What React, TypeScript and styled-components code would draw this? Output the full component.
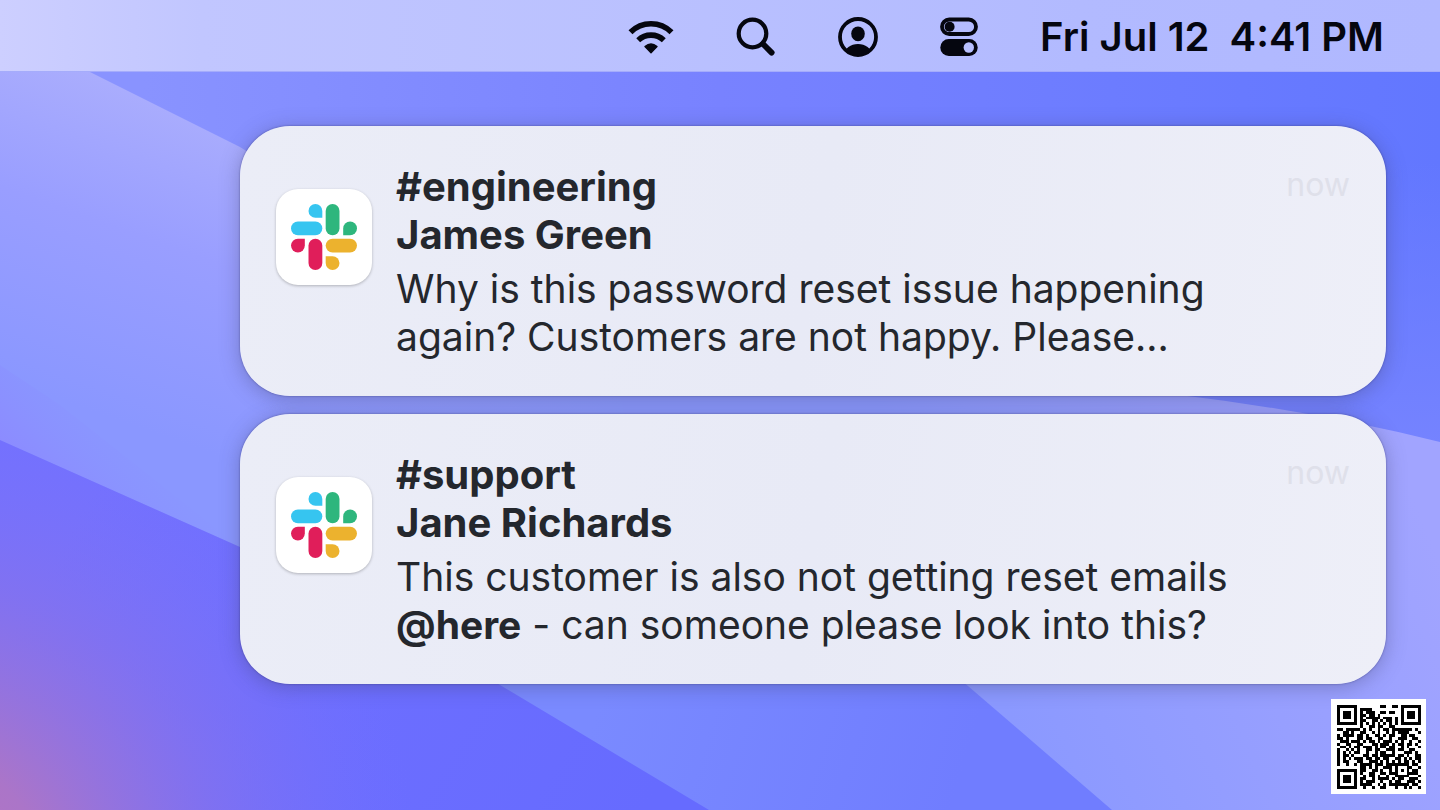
import React from "react";
import styled, { createGlobalStyle } from "styled-components";

const GlobalStyle = createGlobalStyle`
  * { box-sizing: border-box; }
  body { margin: 0; font-family: Inter, "Liberation Sans", sans-serif; color: #24272d; }
  p, h2, ul { margin: 0; padding: 0; }
`;

const Desktop = styled.div`
  position: relative;
  min-height: 100vh;
  overflow: hidden;
  isolation: isolate;
`;

const WallpaperArt = styled.svg`
  position: absolute;
  inset: 0;
  width: 100%;
  height: 100%;
  z-index: -1;
`;

const MenuBar = styled.header`
  display: flex;
  align-items: center;
  justify-content: flex-end;
  gap: 62px;
  height: 72px;
  padding: 3px 56px 0 24px;
  border-bottom: 1px solid #a5acfb;
  background: linear-gradient(90deg, #cdcfff 0%, #c1c6ff 14%, #bac1ff 45%, #b2baff 75%, #b0b8ff 100%);
`;

const MenuButton = styled.button`
  display: flex;
  padding: 0;
  border: 0;
  background: none;
  color: #05060f;
`;

const Clock = styled.time`
  display: flex;
  gap: 20px;
  font-size: 40px;
  font-weight: 600;
  line-height: 48px;
  color: #05060f;
  white-space: nowrap;
`;

const NotificationList = styled.ul`
  display: flex;
  flex-direction: column;
  align-items: flex-end;
  gap: 18px;
  padding: 54px;
  list-style: none;
`;

const Card = styled.li`
  display: flex;
  gap: 24px;
  width: 100%;
  max-width: 1146px;
  padding: 37px 36px 35px;
  border-radius: 50px;
  background: linear-gradient(100deg, #ebedf7 0%, #e8eaf6 50%, #eeeff8 100%);
  box-shadow: 0 0 2px rgba(40, 40, 90, 0.6), 0 3px 20px rgba(60, 60, 100, 0.36);
`;

const AppTile = styled.div`
  display: flex;
  align-items: center;
  justify-content: center;
  flex: none;
  width: 96px;
  height: 96px;
  margin-top: 26px;
  border-radius: 22px;
  background: #fff;
  box-shadow: 0 1px 3px rgba(0, 0, 0, 0.25);
`;

const Message = styled.div`
  display: flex;
  flex-direction: column;
  gap: 6px;
  flex: 1;
  min-width: 0;
`;

const Title = styled.h2`
  font-size: 40px;
  font-weight: 700;
  line-height: 48px;
`;

const TitleLine = styled.span`
  display: block;
`;

const Body = styled.p`
  font-size: 39px;
  line-height: 48px;
`;

const Mention = styled.strong`
  font-weight: 700;
`;

const Stamp = styled.time`
  flex: none;
  font-size: 32px;
  line-height: 44px;
  color: #dfe0ea;
`;

const QrBadge = styled.div`
  position: absolute;
  right: 14px;
  bottom: 16px;
  display: flex;
  padding: 6px 5px 5px 6px;
  background: #fff;
`;

function Wallpaper() {
  return (
    <WallpaperArt viewBox="0 0 1440 810" preserveAspectRatio="none" aria-hidden="true">
      <defs>
        <linearGradient id="sky" x1="0" y1="0" x2="1" y2="0">
          <stop offset="0.1" stopColor="#8993ff" />
          <stop offset="0.5" stopColor="#7882ff" />
          <stop offset="1" stopColor="#6277ff" />
        </linearGradient>
        <linearGradient id="skyFade" x1="0" y1="0" x2="0" y2="1">
          <stop offset="0.2" stopColor="#7583ff" stopOpacity="0" />
          <stop offset="0.55" stopColor="#7583ff" />
        </linearGradient>
        <linearGradient id="mist" gradientUnits="userSpaceOnUse" x1="170" y1="90" x2="60" y2="400">
          <stop offset="0" stopColor="#abaefd" />
          <stop offset="0.45" stopColor="#999eff" />
          <stop offset="1" stopColor="#8a97ff" />
        </linearGradient>
        <linearGradient id="mistEdge" gradientUnits="userSpaceOnUse" x1="240" y1="0" x2="700" y2="0">
          <stop offset="0" stopColor="#8899ff" stopOpacity="0" />
          <stop offset="1" stopColor="#8899ff" />
        </linearGradient>
        <linearGradient id="fold" gradientUnits="userSpaceOnUse" x1="0" y1="440" x2="70" y2="370">
          <stop offset="0" stopColor="#8c8aff" stopOpacity="0.9" />
          <stop offset="1" stopColor="#8a92ff" stopOpacity="0" />
        </linearGradient>
        <linearGradient id="band" gradientUnits="userSpaceOnUse" x1="600" y1="700" x2="950" y2="810">
          <stop offset="0" stopColor="#7a8aff" />
          <stop offset="1" stopColor="#707dff" />
        </linearGradient>
        <linearGradient id="rise" gradientUnits="userSpaceOnUse" x1="1020" y1="740" x2="1440" y2="560">
          <stop offset="0" stopColor="#8b99ff" />
          <stop offset="1" stopColor="#a1a4ff" />
        </linearGradient>
        <linearGradient id="deep" gradientUnits="userSpaceOnUse" x1="100" y1="480" x2="650" y2="800">
          <stop offset="0" stopColor="#7371ff" />
          <stop offset="1" stopColor="#666bff" />
        </linearGradient>
        <radialGradient id="glow" gradientUnits="userSpaceOnUse" cx="-80" cy="880" r="500">
          <stop offset="0" stopColor="#b774bf" />
          <stop offset="0.25" stopColor="#ab75c8" />
          <stop offset="0.6" stopColor="#8a72e8" stopOpacity="0.6" />
          <stop offset="1" stopColor="#7371ff" stopOpacity="0" />
        </radialGradient>
      </defs>
      <rect width="1440" height="810" fill="url(#sky)" />
      <rect width="1440" height="810" fill="url(#skyFade)" />
      <path d="M0 30L90 72L240 147L640 400V600H0Z" fill="url(#mist)" />
      <path d="M0 30L90 72L240 147L640 400V600H0Z" fill="url(#mistEdge)" />
      <path d="M0 365L60 405L240 547L0 440Z" fill="url(#fold)" />
      <path d="M620 395L1180 395Q1320 412 1440 442V810H700Z" fill="url(#rise)" />
      <path d="M400 600H860L968 686L1112 810H400Z" fill="url(#band)" />
      <path d="M0 440L240 547Q380 612 500 685L709 810H0Z" fill="url(#deep)" />
      <path d="M0 440L240 547Q380 612 500 685L709 810H0Z" fill="url(#glow)" />
    </WallpaperArt>
  );
}

function WifiIcon() {
  return (
    <svg width="46" height="36" viewBox="0 0 46 36" fill="none" stroke="currentColor" strokeWidth="5.6" strokeLinejoin="round" aria-hidden="true">
      <path d="M2.500 13.300A29 29 0 0 1 43.500 13.300" />
      <path d="M10.200 21.300A18.500 18.500 0 0 1 35.800 21.300" />
      <path d="M17 27.600Q23 22.200 29 27.600L23 33.800Z" fill="currentColor" strokeWidth="1.400" />
    </svg>
  );
}

function SearchIcon() {
  return (
    <svg width="40" height="40" viewBox="0 0 40 40" fill="none" stroke="currentColor" aria-hidden="true">
      <circle cx="16.500" cy="16.500" r="13.800" strokeWidth="4.200" />
      <path d="M27 27L35.600 35.600" strokeWidth="5.800" strokeLinecap="round" />
    </svg>
  );
}

function AccountIcon() {
  return (
    <svg width="40" height="40" viewBox="0 0 40 40" aria-hidden="true">
      <defs>
        <clipPath id="face">
          <circle cx="20" cy="20" r="18.500" />
        </clipPath>
      </defs>
      <circle cx="20" cy="20" r="18" fill="none" stroke="currentColor" strokeWidth="3.800" />
      <ellipse cx="20" cy="16.800" rx="6.800" ry="7.400" fill="currentColor" />
      <ellipse cx="20" cy="37" rx="13.500" ry="10" fill="currentColor" clipPath="url(#face)" />
    </svg>
  );
}

function ControlsIcon() {
  return (
    <svg width="38" height="40" viewBox="0 0 38 40" aria-hidden="true">
      <rect x="2" y="2.500" width="34" height="14.500" rx="7.250" fill="none" stroke="currentColor" strokeWidth="3.800" />
      <circle cx="9.600" cy="9.700" r="5" fill="currentColor" />
      <rect x="0.300" y="22" width="37.400" height="17" rx="8.500" fill="currentColor" />
      <circle cx="28.800" cy="30.500" r="5.200" fill="#b8c0ff" />
    </svg>
  );
}

function SlackLogo() {
  return (
    <svg width="66" height="66" viewBox="0 0 196 196" role="img" aria-label="Slack">
      <path fill="#36c5f0" d="M72.500 0A20.500 20.500 0 0 0 72.500 41H93V20.500A20.500 20.500 0 0 0 72.500 0Z" />
      <rect fill="#36c5f0" x="0" y="52" width="93" height="41" rx="20.500" />
      <rect fill="#2eb67d" x="103" y="0" width="41" height="93" rx="20.500" />
      <path fill="#2eb67d" d="M196 72.500A20.500 20.500 0 0 0 155 72.500V93H175.500A20.500 20.500 0 0 0 196 72.500Z" />
      <path fill="#e01e5a" d="M0 123.500A20.500 20.500 0 0 0 41 123.500V103H20.500A20.500 20.500 0 0 0 0 123.500Z" />
      <rect fill="#e01e5a" x="52" y="103" width="41" height="93" rx="20.500" />
      <rect fill="#ecb22e" x="103" y="103" width="93" height="41" rx="20.500" />
      <path fill="#ecb22e" d="M123.500 196A20.500 20.500 0 0 0 123.500 155H103V175.500A20.500 20.500 0 0 0 123.500 196Z" />
    </svg>
  );
}

const QR_ROWS = [
  "#######........##..##.#######",
  "#.....#.####..........#.....#",
  "#.###.#.#.###..##.##..#.###.#",
  "#.###.#.##.##.#.......#.###.#",
  "#.###.#.#.#####.###.#.#.###.#",
  "#.....#.##..##.#.##.#.#.....#",
  "#######.#.#.#.#.#.#.#.#######",
  "........#..##.##..##.........",
  "##.#####.#.#..#.##.#######.#.",
  "..##.#..##..#.#..#.#.####...#",
  "#.####.##.#..##.#.##..##.##..",
  "##.#...##.##..##..#..###..##.",
  ".###.###.#.##.#.###.#.#..#..#",
  "#..##..##...##.###.#.##.##.#.",
  ".##.#.##.###.#.##.##..#.#...#",
  "#..#.#.#..##.##..###.##..##..",
  "#.#.#.##..#..#.##..#...###.#.",
  "#.##.#...##.##.#####.##.#..##",
  "#.#.#.###.##.##.##..##.#.#.##",
  "#.##...##..###.#.#.#.#.##.#.#",
  "#..#..#.####.###.########.##.",
  "........##.#.#..###.#...##..#",
  "#######.##..##.#..#.#.#.#.##.",
  "#.....#.#..##..##.###...####.",
  "#.###.#..#.##.#..#..#####...#",
  "#.###.#.##..#.####.#.##..###.",
  "#.###.#.#.###..#..#.##..###.#",
  "#.....#.####..#.#.#######.##.",
  "#######..#..#..##...#..#.#..#",
];

function QrCode() {
  const cells = QR_ROWS.map((row, y) =>
    Array.from(row)
      .map((cell, x) => (cell === "#" ? `M${x} ${y}h1v1h-1z` : ""))
      .join("")
  ).join("");
  return (
    <QrBadge>
      <svg width="84" height="84" viewBox="0 0 29 29" shapeRendering="crispEdges" role="img" aria-label="QR code">
        <path d={cells} fill="#000" />
      </svg>
    </QrBadge>
  );
}

type NotificationProps = {
  channel: string;
  sender: string;
  children: React.ReactNode;
};

function Notification({ channel, sender, children }: NotificationProps) {
  return (
    <Card>
      <AppTile>
        <SlackLogo />
      </AppTile>
      <Message>
        <Title>
          <TitleLine>{channel}</TitleLine>
          <TitleLine>{sender}</TitleLine>
        </Title>
        <Body>{children}</Body>
      </Message>
      <Stamp>now</Stamp>
    </Card>
  );
}

export default function App() {
  return (
    <Desktop>
      <GlobalStyle />
      <Wallpaper />
      <MenuBar>
        <MenuButton type="button" aria-label="Wi-Fi"><WifiIcon /></MenuButton>
        <MenuButton type="button" aria-label="Search"><SearchIcon /></MenuButton>
        <MenuButton type="button" aria-label="Account"><AccountIcon /></MenuButton>
        <MenuButton type="button" aria-label="Control Center"><ControlsIcon /></MenuButton>
        <Clock>
          <span>Fri Jul 12</span>
          <span>4:41 PM</span>
        </Clock>
      </MenuBar>
      <main>
        <NotificationList>
          <Notification channel="#engineering" sender="James Green">
            Why is this password reset issue happening again? Customers are not happy. Please...
          </Notification>
          <Notification channel="#support" sender="Jane Richards">
            This customer is also not getting reset emails <Mention>@here</Mention> - can someone please look into this?
          </Notification>
        </NotificationList>
      </main>
      <QrCode />
    </Desktop>
  );
}
